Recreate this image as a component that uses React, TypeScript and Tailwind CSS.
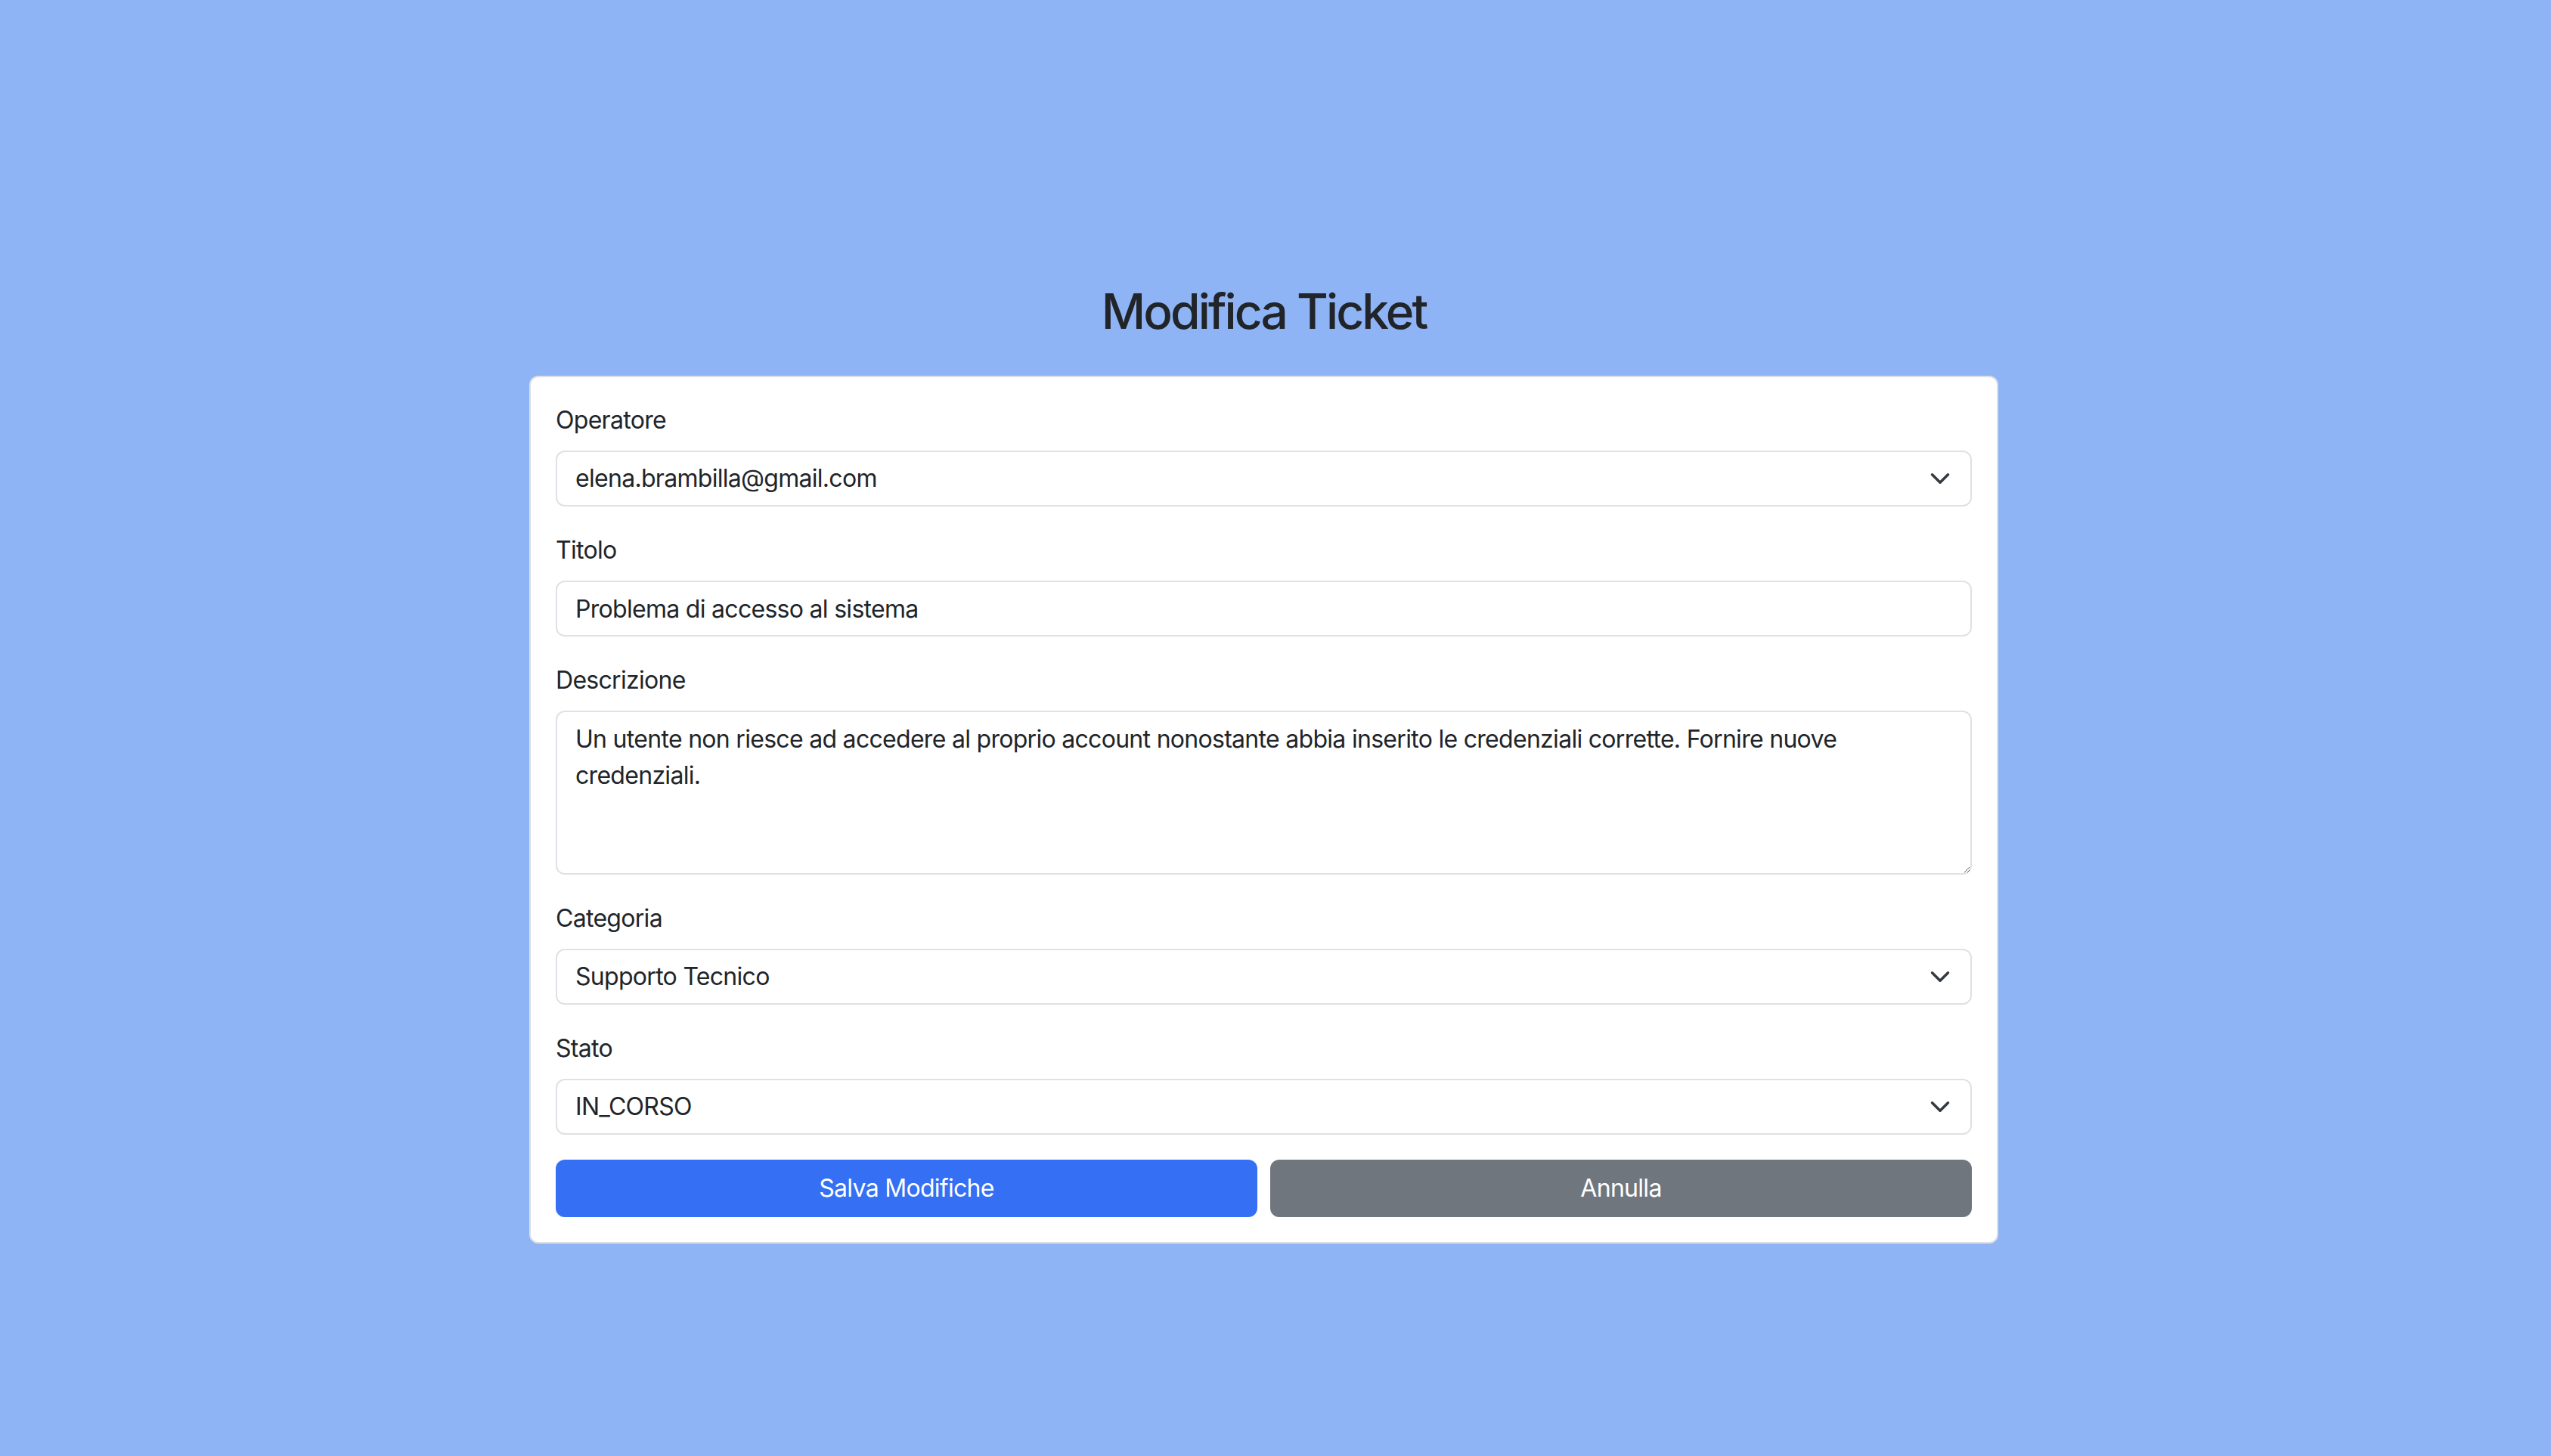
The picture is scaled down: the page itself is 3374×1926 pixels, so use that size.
import React from "react";

const Chevron = () => (
  <svg
    className="pointer-events-none absolute right-[28px] top-1/2 -translate-y-1/2"
    width="28"
    height="28"
    viewBox="0 0 16 16"
    fill="none"
  >
    <path d="m2 5 6 6 6-6" stroke="#343a40" strokeWidth="2" strokeLinecap="round" strokeLinejoin="round" />
  </svg>
);

const labelCls = "block text-[32px] leading-[48px] mb-4 text-[#212529] tracking-[-0.022em]";
const fieldCls =
  "w-full h-[74px] border-2 border-[#dee2e6] rounded-[12px] bg-white px-[24px] text-[32px] leading-[48px] text-[#212529] outline-none tracking-[-0.022em]";

function SelectField({ label, value, options }: { label: string; value: string; options: string[] }) {
  return (
    <div className="mb-[34px]">
      <label className={labelCls}>{label}</label>
      <div className="relative">
        <select defaultValue={value} className={fieldCls + " appearance-none pr-[80px]"} style={{ fontFamily: "Inter, sans-serif" }}>
          {options.map((o) => (
            <option key={o} value={o}>
              {o}
            </option>
          ))}
        </select>
        <Chevron />
      </div>
    </div>
  );
}

export default function App() {
  return (
    <div
      className="min-h-screen w-full bg-[#8fb4f5] pt-[373px] pr-[31px] flex flex-col items-center"
      style={{ fontFamily: "Inter, 'Liberation Sans', sans-serif" }}
    >
      <h2 className="text-[64px] leading-[77px] font-medium text-[#212529] mb-[47px] tracking-[-0.045em]">Modifica Ticket</h2>
      <div className="w-[1943px] bg-white border-2 border-[#dcdfe3] rounded-[12px] pt-[33px] px-[33px] pb-[33px]">
        <SelectField
          label="Operatore"
          value="elena.brambilla@gmail.com"
          options={["elena.brambilla@gmail.com", "mario.rossi@gmail.com"]}
        />
        <div className="mb-[34px]">
          <label className={labelCls}>Titolo</label>
          <input className={fieldCls} defaultValue="Problema di accesso al sistema" style={{ fontFamily: "Inter, sans-serif" }} />
        </div>
        <div className="mb-[34px]">
          <label className={labelCls}>Descrizione</label>
          <textarea
            className="block w-full h-[217px] border-2 border-[#dee2e6] rounded-[12px] bg-white px-[24px] py-[12px] text-[32px] leading-[48px] text-[#212529] outline-none tracking-[-0.022em]"
            style={{ fontFamily: "Inter, sans-serif" }}
            defaultValue="Un utente non riesce ad accedere al proprio account nonostante abbia inserito le credenziali corrette. Fornire nuove credenziali."
          />
        </div>
        <SelectField
          label="Categoria"
          value="Supporto Tecnico"
          options={["Supporto Tecnico", "Amministrazione", "Altro"]}
        />
        <div className="mb-[33px]">
          <label className={labelCls}>Stato</label>
          <div className="relative">
            <select defaultValue="IN_CORSO" className={fieldCls + " appearance-none pr-[80px]"} style={{ fontFamily: "Inter, sans-serif" }}>
              <option value="APERTO">APERTO</option>
              <option value="IN_CORSO">IN_CORSO</option>
              <option value="CHIUSO">CHIUSO</option>
            </select>
            <Chevron />
          </div>
        </div>
        <div className="flex gap-[17px]">
          <button className="flex-1 h-[76px] rounded-[12px] bg-[#346ff4] text-white text-[32px] tracking-[-0.022em]">Salva Modifiche</button>
          <button className="flex-1 h-[76px] rounded-[12px] bg-[#70767e] text-white text-[32px] tracking-[-0.022em]">Annulla</button>
        </div>
      </div>
    </div>
  );
}
